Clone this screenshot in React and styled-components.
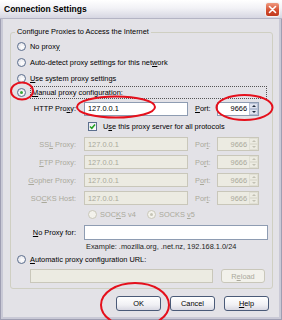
import styled, { createGlobalStyle } from 'styled-components'

const GlobalStyle = createGlobalStyle`
  html, body { margin: 0; padding: 0; background: #ffffff; }
  body {
    font-family: "Liberation Sans", Arial, sans-serif;
    font-size: 7.4px;
    color: #000;
  }
`

const Window = styled.div`
  position: relative;
  box-sizing: border-box;
  width: 282px;
  height: 320px;
  display: flex;
  flex-direction: column;
  background: #c9c9d6;
  border: 1px solid #9e9eb2;
  border-top: none;
`

const TitleBar = styled.div`
  height: 18px;
  flex: none;
  display: flex;
  align-items: center;
  justify-content: space-between;
  padding: 0 2px 0 4px;
  margin: 0 -1px;
  background: linear-gradient(#ffffff 0%, #f2f2f6 45%, #d6d6e2 100%);
  border-bottom: 1px solid #b4b4c4;
`

const Title = styled.div`
  font-size: 8.5px;
  font-weight: bold;
  color: #000;
`

const CloseButton = styled.div`
  width: 13px;
  height: 13px;
  border: 1px solid #f4f4f4;
  border-radius: 3px;
  background: linear-gradient(#f09a80, #d24a2c 60%, #c0391e);
  display: flex;
  align-items: center;
  justify-content: center;
`

const Body = styled.div`
  flex: 1;
  margin: 0 2px 2px 2px;
  padding: 8px 6px 0 7px;
  background: #e3e2e7;
  display: flex;
  flex-direction: column;
`

const Group = styled.fieldset`
  margin: 0;
  padding: 0 0 3px 0;
  border: 1px solid #cfcfc2;
  border-radius: 3px;
  min-width: 0;
`

const Legend = styled.legend`
  margin-left: 4px;
  padding: 0 2px;
  line-height: 10px;
`

const Rows = styled.div`
  display: flex;
  flex-direction: column;
  padding-top: 1px;
`

const Text = styled.span`
  white-space: nowrap;
`

const RadioRow = styled.div`
  height: ${p => p.$h || 16}px;
  display: flex;
  align-items: center;
  gap: 4px;
  padding-left: ${p => p.$indent || 6}px;
  color: ${p => (p.$disabled ? '#aaa99b' : '#000')};
`

const Circle = styled.span`
  flex: none;
  width: 9px;
  height: 9px;
  box-sizing: border-box;
  border-radius: 50%;
  border: 1px solid ${p => (p.$disabled ? '#c9c7ba' : '#5c6f8e')};
  background: ${p => (p.$disabled ? '#f3f2ec' : 'radial-gradient(circle at 60% 60%, #ffffff, #dcdce4)')};
  display: flex;
  align-items: center;
  justify-content: center;
  &::after {
    content: '';
    display: ${p => (p.$checked ? 'block' : 'none')};
    width: 3px;
    height: 3px;
    border-radius: 50%;
    background: ${p => (p.$disabled ? '#c6c5b8' : '#38a838')};
  }
`

const FocusBox = styled.span`
  flex: 1;
  margin-right: 5px;
  padding: 1px 1px;
  border: 1px dotted #555;
  white-space: nowrap;
`

const ProxyRow = styled.div`
  height: ${p => p.$h || 18}px;
  display: grid;
  grid-template-columns: 65px 112px 29px 42px;
  align-items: center;
  color: ${p => (p.$disabled ? '#aaa99b' : '#000')};
`

const Label = styled.span`
  text-align: right;
  white-space: nowrap;
`

const PortLabel = styled.span`
  padding-left: 7px;
`

const Field = styled.div`
  box-sizing: border-box;
  height: ${p => p.$h || 14}px;
  margin-left: ${p => p.$ml || 0}px;
  width: ${p => (p.$w ? `${p.$w}px` : 'auto')};
  border: 1px solid ${p => (p.$disabled ? '#c9c7ba' : '#8e9cb2')};
  background: ${p => (p.$disabled ? '#ecebe2' : '#ffffff')};
  color: ${p => (p.$disabled ? '#aaa99b' : '#000')};
  display: flex;
  align-items: center;
  padding-left: 3px;
  white-space: nowrap;
`

const PortField = styled(Field)`
  padding-left: 0;
  justify-content: flex-end;
`

const Spinner = styled.div`
  width: 9px;
  height: 12px;
  margin-left: 2px;
  display: flex;
  flex-direction: column;
`

const SpinBtn = styled.div`
  flex: 1;
  display: flex;
  align-items: center;
  justify-content: center;
  background: ${p => (p.$disabled ? '#ecebe2' : '#dfe3ee')};
  border: 1px solid ${p => (p.$disabled ? '#e0dfd4' : '#b7c1d6')};
  box-sizing: border-box;
`

const Arrow = styled.span`
  width: 0;
  height: 0;
  border-left: 2px solid transparent;
  border-right: 2px solid transparent;
  ${p => (p.$down ? 'border-top' : 'border-bottom')}: 2px solid ${p => (p.$disabled ? '#c2c1b4' : '#1e2a3c')};
`

const CheckRow = styled.div`
  height: 17px;
  display: flex;
  align-items: center;
  gap: 6px;
  padding-left: 77px;
`

const CheckBox = styled.span`
  width: 9px;
  height: 9px;
  box-sizing: border-box;
  border: 1px solid #5c6f8e;
  background: linear-gradient(135deg, #e6e6ee, #ffffff);
  display: flex;
  align-items: center;
  justify-content: center;
`

const SocksOption = styled.span`
  display: inline-flex;
  align-items: center;
  gap: 3px;
  width: ${p => (p.$w ? `${p.$w}px` : 'auto')};
`

const NoProxyRow = styled.div`
  height: 20px;
  display: grid;
  grid-template-columns: 65px 1fr;
  align-items: center;
  padding-right: 4px;
`

const Example = styled.div`
  height: 9px;
  line-height: 9px;
  padding-left: 75px;
  color: #222;
`

const UrlRow = styled.div`
  height: 18px;
  display: flex;
  align-items: center;
  padding-left: 19px;
  gap: 8px;
`

const Button = styled.div`
  box-sizing: border-box;
  width: ${p => p.$w || 45}px;
  height: ${p => p.$h || 15}px;
  border: 1px solid ${p => (p.$disabled ? '#c9c7ba' : '#4a5a78')};
  border-radius: 3px;
  background: ${p => (p.$disabled ? '#f2f1eb' : 'linear-gradient(#ffffff, #f0f0f4 60%, #d8d8e2)')};
  color: ${p => (p.$disabled ? '#aaa99b' : '#000')};
  display: flex;
  align-items: center;
  justify-content: center;
`

const ButtonRow = styled.div`
  display: flex;
  justify-content: flex-end;
  gap: 9px;
  margin-top: 7px;
  padding-right: 4px;
`

const Overlay = styled.svg`
  position: absolute;
  left: 0;
  top: 0;
  pointer-events: none;
`

function Radio({ checked, disabled }) {
  return <Circle $checked={checked} $disabled={disabled} />
}

function Port({ disabled }) {
  return (
    <PortField $disabled={disabled}>
      9666
      <Spinner>
        <SpinBtn $disabled={disabled}><Arrow $disabled={disabled} /></SpinBtn>
        <SpinBtn $disabled={disabled}><Arrow $down $disabled={disabled} /></SpinBtn>
      </Spinner>
    </PortField>
  )
}

const proxies = [
  { label: <>SS<u>L</u> Proxy:</>, port: <>Por<u>t</u>:</> },
  { label: <><u>F</u>TP Proxy:</>, port: <>Po<u>r</u>t:</> },
  { label: <><u>G</u>opher Proxy:</>, port: <>P<u>o</u>rt:</> },
  { label: <>SO<u>C</u>KS Host:</>, port: <>Por<u>t</u>:</> },
]

export default function App() {
  return (
    <>
      <GlobalStyle />
      <Window>
        <TitleBar>
          <Title>Connection Settings</Title>
          <CloseButton>
            <svg width="9" height="9" viewBox="0 0 9 9">
              <path d="M1.5 1.5 L7.5 7.5 M7.5 1.5 L1.5 7.5" stroke="#fff" strokeWidth="1.6" strokeLinecap="round" />
            </svg>
          </CloseButton>
        </TitleBar>
        <Body>
          <Group>
            <Legend>Configure Proxies to Access the Internet</Legend>
            <Rows>
              <RadioRow><Radio /><Text>No prox<u>y</u></Text></RadioRow>
              <RadioRow><Radio /><Text>Auto-detect proxy settings for this net<u>w</u>ork</Text></RadioRow>
              <RadioRow><Radio /><Text><u>U</u>se system proxy settings</Text></RadioRow>
              <RadioRow $h={13}>
                <Radio checked />
                <FocusBox><u>M</u>anual proxy configuration:</FocusBox>
              </RadioRow>
              <ProxyRow $h={19}>
                <Label>HTTP Pro<u>x</u>y:</Label>
                <Field $ml={8}>127.0.0.1</Field>
                <PortLabel><u>P</u>ort:</PortLabel>
                <Port />
              </ProxyRow>
              <CheckRow>
                <CheckBox>
                  <svg width="7" height="7" viewBox="0 0 7 7">
                    <path d="M1 3.5 L2.8 5.3 L6 1.5" fill="none" stroke="#21a121" strokeWidth="1.5" />
                  </svg>
                </CheckBox>
                <Text>U<u>s</u>e this proxy server for all protocols</Text>
              </CheckRow>
              {proxies.map((p, i) => (
                <ProxyRow key={i} $disabled>
                  <Label>{p.label}</Label>
                  <Field $ml={8} $disabled>127.0.0.1</Field>
                  <PortLabel>{p.port}</PortLabel>
                  <Port disabled />
                </ProxyRow>
              ))}
              <RadioRow $h={15} $indent={77} $disabled>
                <SocksOption $w={55}><Radio disabled /><Text>SOC<u>K</u>S v4</Text></SocksOption>
                <SocksOption><Radio disabled checked /><Text>SOCKS <u>v</u>5</Text></SocksOption>
              </RadioRow>
              <NoProxyRow>
                <Label><u>N</u>o Proxy for:</Label>
                <Field $h={15} $ml={8} />
              </NoProxyRow>
              <Example>Example: .mozilla.org, .net.nz, 192.168.1.0/24</Example>
              <RadioRow><Radio /><Text><u>A</u>utomatic proxy configuration URL:</Text></RadioRow>
              <UrlRow>
                <Field $w={183} $disabled />
                <Button $w={44} $h={14} $disabled><Text>R<u>e</u>load</Text></Button>
              </UrlRow>
            </Rows>
          </Group>
          <ButtonRow>
            <Button>OK</Button>
            <Button>Cancel</Button>
            <Button><Text><u>H</u>elp</Text></Button>
          </ButtonRow>
        </Body>
        <Overlay width="282" height="320" viewBox="0 0 282 320">
          <g fill="none" stroke="#e5101c" strokeWidth="2">
            <ellipse cx="21" cy="91" rx="11" ry="8.5" />
            <ellipse cx="115" cy="107" rx="39" ry="10.5" />
            <ellipse cx="243.5" cy="107.5" rx="28" ry="12.5" />
            <ellipse cx="134" cy="305" rx="34" ry="22" />
          </g>
        </Overlay>
      </Window>
    </>
  )
}
